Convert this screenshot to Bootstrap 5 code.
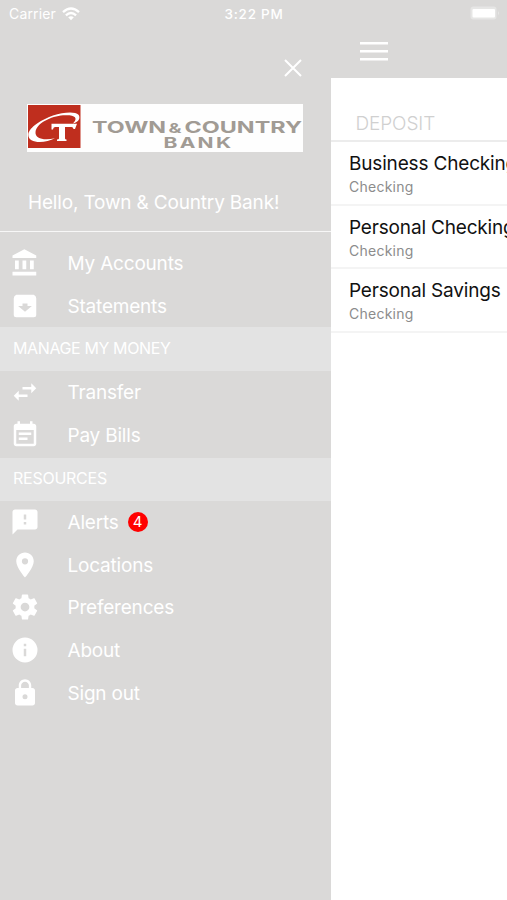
<!DOCTYPE html>
<html lang="en">
<head>
<meta charset="utf-8">
<meta name="viewport" content="width=device-width, initial-scale=1">
<title>Town &amp; Country Bank</title>
<link href="https://cdn.jsdelivr.net/npm/bootstrap@5.3.0/dist/css/bootstrap.min.css" rel="stylesheet">
<style>
body{font-family:Inter,"Liberation Sans",sans-serif;background:#fff;line-height:1.2}
.screen{height:900px}
.drawer{width:331px;background:#dad9d8;color:#fff}
.status-left{height:27px;padding-left:9px;font-size:14px;letter-spacing:.15px}
.carrier{padding-top:1px}
.wifi{margin-left:6.5px}
.clock{left:224.5px;top:0;height:28px;font-size:13.5px;font-weight:500;letter-spacing:.8px;letter-spacing:.75px;color:#fff}
.closer{height:77px;padding:32px 29px 0 0}
.brand{height:48px;margin-left:27px}
.hello{height:80px;padding:23px 0 0 28px;font-size:19px;letter-spacing:-.17px;border-bottom:1px solid #f7f7f7}
.menu{padding-top:9.5px}
.entry{height:42.75px;padding-left:10.3px;font-size:19px;letter-spacing:-.2px;color:#fff}
.entry svg{width:30px;height:30px;fill:#fff;margin-right:27.2px;flex:none}
.entry-label{padding-top:3px}
.group{height:43.5px;padding-left:13px;font-size:16px;letter-spacing:-.38px;background:#e3e3e3}
.group-resources{height:43px;margin-top:1.5px;letter-spacing:-.25px}
.count{width:20px;height:20px;background:#f00;font-size:15px;margin-left:9px}
.topbar{height:78px;background:#dad9d8}
.burger{padding:42px 0 0 29px}
.battery{right:7px;top:6px}
.deposit{height:64px;padding:35px 0 0 24.5px;font-size:19px;font-weight:300;letter-spacing:-.1px;color:#d0d0d0;border-bottom:2px solid #ececec}
.account{height:63.5px;padding:10px 0 0 18px;border-bottom:2px solid #f4f4f4;white-space:nowrap}
.account-name{font-size:19px;letter-spacing:-.17px;color:#111;line-height:24px}
.account-kind{font-size:14px;color:#8c8c8c;line-height:21px;letter-spacing:.25px}
</style>
<script src="https://cdn.jsdelivr.net/npm/bootstrap@5.3.0/dist/js/bootstrap.bundle.min.js"></script>
</head>
<body>
<div class="screen d-flex overflow-hidden position-relative">
  <nav class="drawer flex-shrink-0 d-flex flex-column">
    <div class="status-left d-flex align-items-center"><span class="carrier">Carrier</span>
      <svg class="wifi" width="18" height="14" viewBox="0 0 18 14" fill="none" stroke="#fff" stroke-width="2.3"><path d="M1 5.200Q9-2.200 17 5.200M3.900 8.300Q9 3.700 14.100 8.300"/><path d="M6.200 10.300Q9 8 11.800 10.300L9 13.200z" fill="#fff" stroke="none"/></svg>
    </div>
    <div class="closer d-flex justify-content-end"><svg width="18" height="18" viewBox="0 0 18 18" stroke="#fff" stroke-width="2"><path d="M1 1l16 16M17 1L1 17"/></svg></div>
    <div class="brand">
      <svg class="d-block" width="276" height="48" viewBox="0 0 276 48"><path fill="#fefefe" d="M0 0h276v48H0z"/><path fill="#bf2e1e" d="M1 1h52.500v43H1z"/>
        <path fill="#fff" d="M46 19.500C52.500 18 53.500 13.500 51.500 10.800C48 7 36 8.300 26 11.500C16 15 2 23 1.300 30.500C1 40 18 39.500 28 34.300C17 36.500 8 35 8.500 28C9.500 19 24 12.500 36 11.300C47 10.500 52 13 46 19.500z"/>
        <path fill="#fff" d="M24.500 19.800H50L48 25h-1.500q-.3-2-2-2H38v11.500q0 1 1.500 1V37H30v-1.500q2 0 2-1V23h-4q-1.800 0-2 2.500h-1.500z"/>
        <g font-family="Inter,Liberation Sans,sans-serif" font-weight="700" fill="#a19b94"><text x="65" y="28.500" font-size="16" textLength="74" lengthAdjust="spacingAndGlyphs">TOWN</text><text x="141.500" y="28.500" font-size="13" textLength="13" lengthAdjust="spacingAndGlyphs">&amp;</text><text x="157.500" y="28.500" font-size="16" textLength="117.500" lengthAdjust="spacingAndGlyphs">COUNTRY</text><text transform="translate(136.500 44) scale(1.5 1)" font-size="14" textLength="45">BANK</text></g>
      </svg>
    </div>
    <div class="hello d-flex align-items-center"><span>Hello, Town &amp; Country Bank!</span></div>
    <div class="menu d-flex flex-column">
      <a class="entry d-flex align-items-center text-decoration-none"><svg viewBox="0 0 24 24"><path d="M4 10v7h3v-7H4zm6 0v7h3v-7h-3zM2 22h19v-3H2v3zm14-12v7h3v-7h-3zm-4.500-9L2 6v2h19V6z"/></svg><span class="entry-label">My Accounts</span></a>
      <a class="entry d-flex align-items-center text-decoration-none"><svg viewBox="0 0 24 24"><path fill-rule="evenodd" d="M5 3h14q2 1 2 3v13a2 2 0 0 1-2 2H5a2 2 0 0 1-2-2V6q0-2 2-3zM12 16.500L17.500 12H14v-2h-4v2H6.500z"/></svg><span class="entry-label">Statements</span></a>
      <div class="group d-flex align-items-center"><span>MANAGE MY MONEY</span></div>
      <a class="entry d-flex align-items-center text-decoration-none"><svg viewBox="0 0 24 24"><path d="M6.990 11L3 15l3.990 4v-3H14v-2H6.990zM21 9l-3.990-4v3H10v2h7.010v3z"/></svg><span class="entry-label">Transfer</span></a>
      <a class="entry d-flex align-items-center text-decoration-none"><svg viewBox="0 0 24 24"><path d="M17 10H7v2h10v-2zm2-7h-1V1h-2v2H8V1H6v2H5c-1.110 0-2 .9-2 2v14c0 1.100.89 2 2 2h14c1.100 0 2-.9 2-2V5c0-1.100-.9-2-2-2zm0 16H5V8h14v11zm-5-5H7v2h7v-2z"/></svg><span class="entry-label">Pay Bills</span></a>
      <div class="group group-resources d-flex align-items-center"><span>RESOURCES</span></div>
      <a class="entry d-flex align-items-center text-decoration-none"><svg viewBox="0 0 24 24"><path d="M20 2H4c-1.100 0-2 .9-2 2v18l4-4h14c1.100 0 2-.9 2-2V4c0-1.100-.9-2-2-2zm-7 12h-2v-2h2v2zm0-4h-2V6h2v4z"/></svg><span class="entry-label">Alerts</span><span class="count rounded-circle d-flex align-items-center justify-content-center">4</span></a>
      <a class="entry d-flex align-items-center text-decoration-none"><svg viewBox="0 0 24 24"><path d="M12 2C8.130 2 5 5.130 5 9c0 5.250 7 13 7 13s7-7.750 7-13c0-3.870-3.130-7-7-7zm0 9.500a2.500 2.500 0 0 1 0-5 2.500 2.500 0 0 1 0 5z"/></svg><span class="entry-label">Locations</span></a>
      <a class="entry d-flex align-items-center text-decoration-none"><svg viewBox="0 0 24 24"><path d="M19.430 12.980c.04-.32.07-.64.07-.98s-.03-.66-.07-.98l2.110-1.650c.19-.15.24-.42.12-.64l-2-3.460c-.12-.22-.39-.3-.61-.22l-2.490 1c-.52-.4-1.080-.73-1.690-.98l-.38-2.650C14.460 2.180 14.250 2 14 2h-4c-.25 0-.46.18-.49.42l-.38 2.650c-.61.25-1.170.59-1.690.98l-2.490-1c-.23-.09-.49 0-.61.22l-2 3.460c-.13.22-.07.49.12.64l2.110 1.650c-.04.32-.07.65-.07.98s.03.66.07.98l-2.110 1.650c-.19.15-.24.42-.12.64l2 3.460c.12.22.39.3.61.22l2.490-1c.52.4 1.080.73 1.690.98l.38 2.650c.03.24.24.42.49.42h4c.25 0 .46-.18.49-.42l.38-2.650c.61-.25 1.170-.59 1.690-.98l2.490 1c.23.09.49 0 .61-.22l2-3.460c.12-.22.07-.49-.12-.64zM12 15.500a3.500 3.500 0 1 1 0-7 3.500 3.500 0 0 1 0 7z"/></svg><span class="entry-label">Preferences</span></a>
      <a class="entry d-flex align-items-center text-decoration-none"><svg viewBox="0 0 24 24"><path d="M12 2a10 10 0 1 0 0 20 10 10 0 0 0 0-20zm1 15h-2v-6h2v6zm0-8h-2V7h2v2z"/></svg><span class="entry-label">About</span></a>
      <a class="entry d-flex align-items-center text-decoration-none"><svg viewBox="0 0 24 24"><path d="M18 8h-1V6c0-2.760-2.240-5-5-5S7 3.240 7 6v2H6c-1.100 0-2 .9-2 2v10c0 1.100.9 2 2 2h12c1.100 0 2-.9 2-2V10c0-1.100-.9-2-2-2zm-6 9a2 2 0 1 1 0-4 2 2 0 0 1 0 4zm3.100-9H8.900V6c0-1.710 1.390-3.100 3.100-3.100s3.100 1.390 3.100 3.100z"/></svg><span class="entry-label">Sign out</span></a>
    </div>
  </nav>
  <main class="flex-grow-1 overflow-hidden">
    <div class="topbar burger"><svg class="d-block" width="28" height="19" viewBox="0 0 28 19" fill="#fff"><path d="M0 0h28v2.600H0zM0 8h28v2.600H0zM0 16h28v2.600H0z"/></svg></div>
    <div class="deposit"><span>DEPOSIT</span></div>
    <div class="account"><div class="account-name"><span>Business Checking</span></div><div class="account-kind"><span>Checking</span></div></div>
    <div class="account"><div class="account-name"><span>Personal Checking</span></div><div class="account-kind"><span>Checking</span></div></div>
    <div class="account"><div class="account-name"><span>Personal Savings</span></div><div class="account-kind"><span>Checking</span></div></div>
  </main>
  <div class="clock position-absolute d-flex align-items-center"><span>3:22 PM</span></div>
  <svg class="battery position-absolute" width="30" height="15" viewBox="0 0 30 15"><rect x=".5" y=".5" width="26" height="13" rx="3" fill="#e6e6e5"/><rect x="2.500" y="3" width="22.500" height="8.500" rx="1" fill="#fff"/><path d="M28 5q2 2.500 0 4z" fill="#e6e6e5"/></svg>
</div>
</body>
</html>
